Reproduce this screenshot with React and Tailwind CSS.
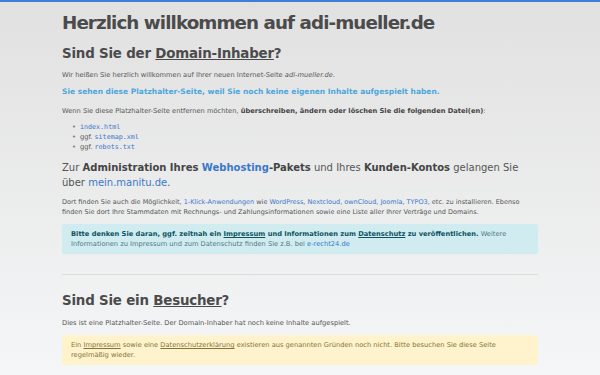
import React from 'react';

const App = () => {
  return (
    <div className="min-h-[375px] bg-gradient-to-b from-[#e1e1e1] to-[#f5f6f7] border-t-2 border-[#3d7fd6] font-['DejaVu_Sans',sans-serif] text-[#555]">
      <div className="w-[476px] mx-auto pt-[9px]">
        <h1 className="text-[18.3px] leading-[24px] font-bold tracking-tighter text-[#4b4b4b]">Herzlich willkommen auf adi-mueller.de</h1>

        <h2 className="mt-[9px] text-[13.4px] leading-[20px] font-bold tracking-[-0.015em] text-[#4b4b4b]">
          Sind Sie der <span className="underline">Domain-Inhaber</span>?
        </h2>
        <p className="mt-[6px] text-[6.7px] leading-[10px]">
          Wir heißen Sie herzlich willkommen auf Ihrer neuen Internet-Seite <i>adi-mueller.de</i>.
        </p>
        <p className="mt-[7px] text-[7.5px] leading-[10px] font-bold text-[#4aa6dc]">
          Sie sehen diese Platzhalter-Seite, weil Sie noch keine eigenen Inhalte aufgespielt haben.
        </p>
        <p className="mt-[9px] text-[6.7px] leading-[10px]">
          Wenn Sie diese Platzhalter-Seite entfernen möchten, <b className="text-[#444]">überschreiben, ändern oder löschen Sie die folgenden Datei(en)</b>:
        </p>
        <ul className="mt-[6px] ml-[10px] text-[6.7px] leading-[10px]">
          <li className="flex items-center gap-[4px]"><span className="text-[#777]">•</span><code className="font-['DejaVu_Sans_Mono',monospace] text-[#3a77c9]">index.html</code></li>
          <li className="flex items-center gap-[4px]"><span className="text-[#777]">•</span><span>ggf. <code className="font-['DejaVu_Sans_Mono',monospace] text-[#3a77c9]">sitemap.xml</code></span></li>
          <li className="flex items-center gap-[4px]"><span className="text-[#777]">•</span><span>ggf. <code className="font-['DejaVu_Sans_Mono',monospace] text-[#3a77c9]">robots.txt</code></span></li>
        </ul>

        <p className="mt-[8px] text-[10px] leading-[15px] text-[#555]">
          Zur <b className="text-[#444]">Administration Ihres <span className="text-[#3a77c9]">Webhosting</span>-Pakets</b> und Ihres <b className="text-[#444]">Kunden-Kontos</b> gelangen Sie über <span className="text-[#3a77c9]">mein.manitu.de</span>.
        </p>
        <p className="mt-[7px] text-[6.5px] leading-[10px]">
          Dort finden Sie auch die Möglichkeit, <span className="text-[#3a77c9]">1-Klick-Anwendungen</span> wie <span className="text-[#3a77c9]">WordPress</span>, <span className="text-[#3a77c9]">Nextcloud</span>, <span className="text-[#3a77c9]">ownCloud</span>, <span className="text-[#3a77c9]">Joomla</span>, <span className="text-[#3a77c9]">TYPO3</span>, etc. zu installieren. Ebenso finden Sie dort Ihre Stammdaten mit Rechnungs- und Zahlungsinformationen sowie eine Liste aller Ihrer Verträge und Domains.
        </p>

        <div className="mt-[7px] rounded-[2px] bg-[#d1ecf1] px-[9px] py-[5px] text-[6.7px] leading-[10px] text-[#4f7a83]">
          <b className="text-[#0c5460]">Bitte denken Sie daran, ggf. zeitnah ein <span className="underline">Impressum</span> und Informationen zum <span className="underline">Datenschutz</span> zu veröffentlichen.</b> Weitere Informationen zu Impressum und zum Datenschutz finden Sie z.B. bei <span className="text-[#3a77c9]">e-recht24.de</span>
        </div>

        <hr className="mt-[20px] border-t border-[#dcdcdc]" />

        <h2 className="mt-[16px] text-[13.4px] leading-[20px] font-bold tracking-[-0.015em] text-[#4b4b4b]">
          Sind Sie ein <span className="underline">Besucher</span>?
        </h2>
        <p className="mt-[7px] text-[6.7px] leading-[10px]">
          Dies ist eine Platzhalter-Seite. Der Domain-Inhaber hat noch keine Inhalte aufgespielt.
        </p>
        <div className="mt-[7px] rounded-[2px] bg-[#fff3cd] px-[9px] py-[5px] text-[6.7px] leading-[10px] text-[#857435]">
          Ein <span className="underline">Impressum</span> sowie eine <span className="underline">Datenschutzerklärung</span> existieren aus genannten Gründen noch nicht. Bitte besuchen Sie diese Seite regelmäßig wieder.
        </div>
      </div>
    </div>
  );
};

export default App;
